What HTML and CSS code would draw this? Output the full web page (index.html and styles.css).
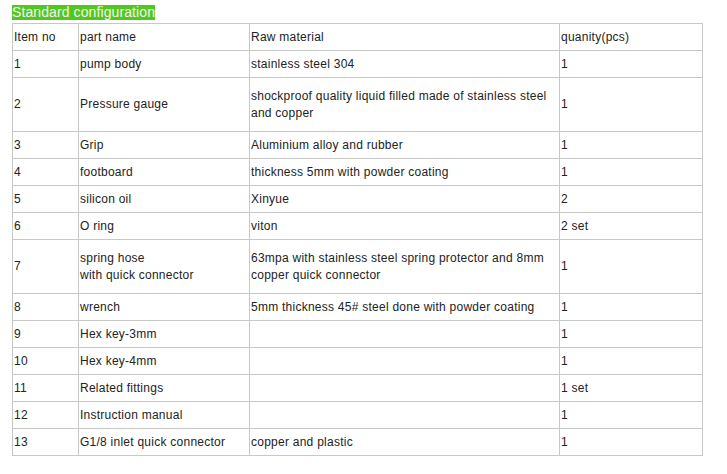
FILE: index.html
```html
<!DOCTYPE html>
<html>
<head>
<meta charset="utf-8">
<link rel="stylesheet" href="styles.css">
</head>
<body>
<div class="page">
  <div class="title"><span class="title-text">Standard configuration</span></div>
  <table class="config">
    <colgroup>
      <col class="c1"><col class="c2"><col class="c3"><col class="c4">
    </colgroup>
    <tbody>
      <tr><td>Item no</td><td>part name</td><td>Raw material</td><td>quanity(pcs)</td></tr>
      <tr><td>1</td><td>pump body</td><td>stainless steel 304</td><td>1</td></tr>
      <tr class="tall"><td>2</td><td>Pressure gauge</td><td>shockproof quality liquid filled made of stainless steel and copper</td><td>1</td></tr>
      <tr><td>3</td><td>Grip</td><td>Aluminium alloy and rubber</td><td>1</td></tr>
      <tr><td>4</td><td>footboard</td><td>thickness 5mm with powder coating</td><td>1</td></tr>
      <tr><td>5</td><td>silicon oil</td><td>Xinyue</td><td>2</td></tr>
      <tr><td>6</td><td>O ring</td><td>viton</td><td>2 set</td></tr>
      <tr class="tall"><td>7</td><td>spring hose<br>with quick connector</td><td>63mpa with stainless steel spring protector and 8mm copper quick connector</td><td>1</td></tr>
      <tr><td>8</td><td>wrench</td><td>5mm thickness 45# steel done with powder coating</td><td>1</td></tr>
      <tr><td>9</td><td>Hex key-3mm</td><td></td><td>1</td></tr>
      <tr><td>10</td><td>Hex key-4mm</td><td></td><td>1</td></tr>
      <tr><td>11</td><td>Related fittings</td><td></td><td>1 set</td></tr>
      <tr><td>12</td><td>Instruction manual</td><td></td><td>1</td></tr>
      <tr><td>13</td><td>G1/8 inlet quick connector</td><td>copper and plastic</td><td>1</td></tr>
    </tbody>
  </table>
</div>
</body>
</html>
```
FILE: styles.css
```css
html, body {
  margin: 0;
  padding: 0;
  background: #fff;
}
.page {
  padding: 5px 12px;
  font-family: "Liberation Sans", Arial, sans-serif;
  color: #222;
}
.title {
  height: 18px;
}
.title-text {
  display: inline-block;
  background: #52c81e;
  color: #f4f4f4;
  font-size: 14px;
  letter-spacing: 0.1px;
  line-height: 15px;
  height: 15px;
  vertical-align: top;
}
.config {
  border-collapse: collapse;
  table-layout: fixed;
  width: 690px;
  font-size: 12px;
  letter-spacing: 0.25px;
}
.c1 { width: 66px; }
.c2 { width: 171px; }
.c3 { width: 310px; }
.c4 { width: 143px; }
.config td {
  border: 1px solid #c8c8c8;
  padding: 0 1px;
  height: 26px;
  line-height: 17px;
  vertical-align: middle;
  box-sizing: border-box;
}
.config tr {
  height: 27px;
}
.config tr.tall {
  height: 54px;
}
.config tr.tall td {
  height: 54px;
}
```
